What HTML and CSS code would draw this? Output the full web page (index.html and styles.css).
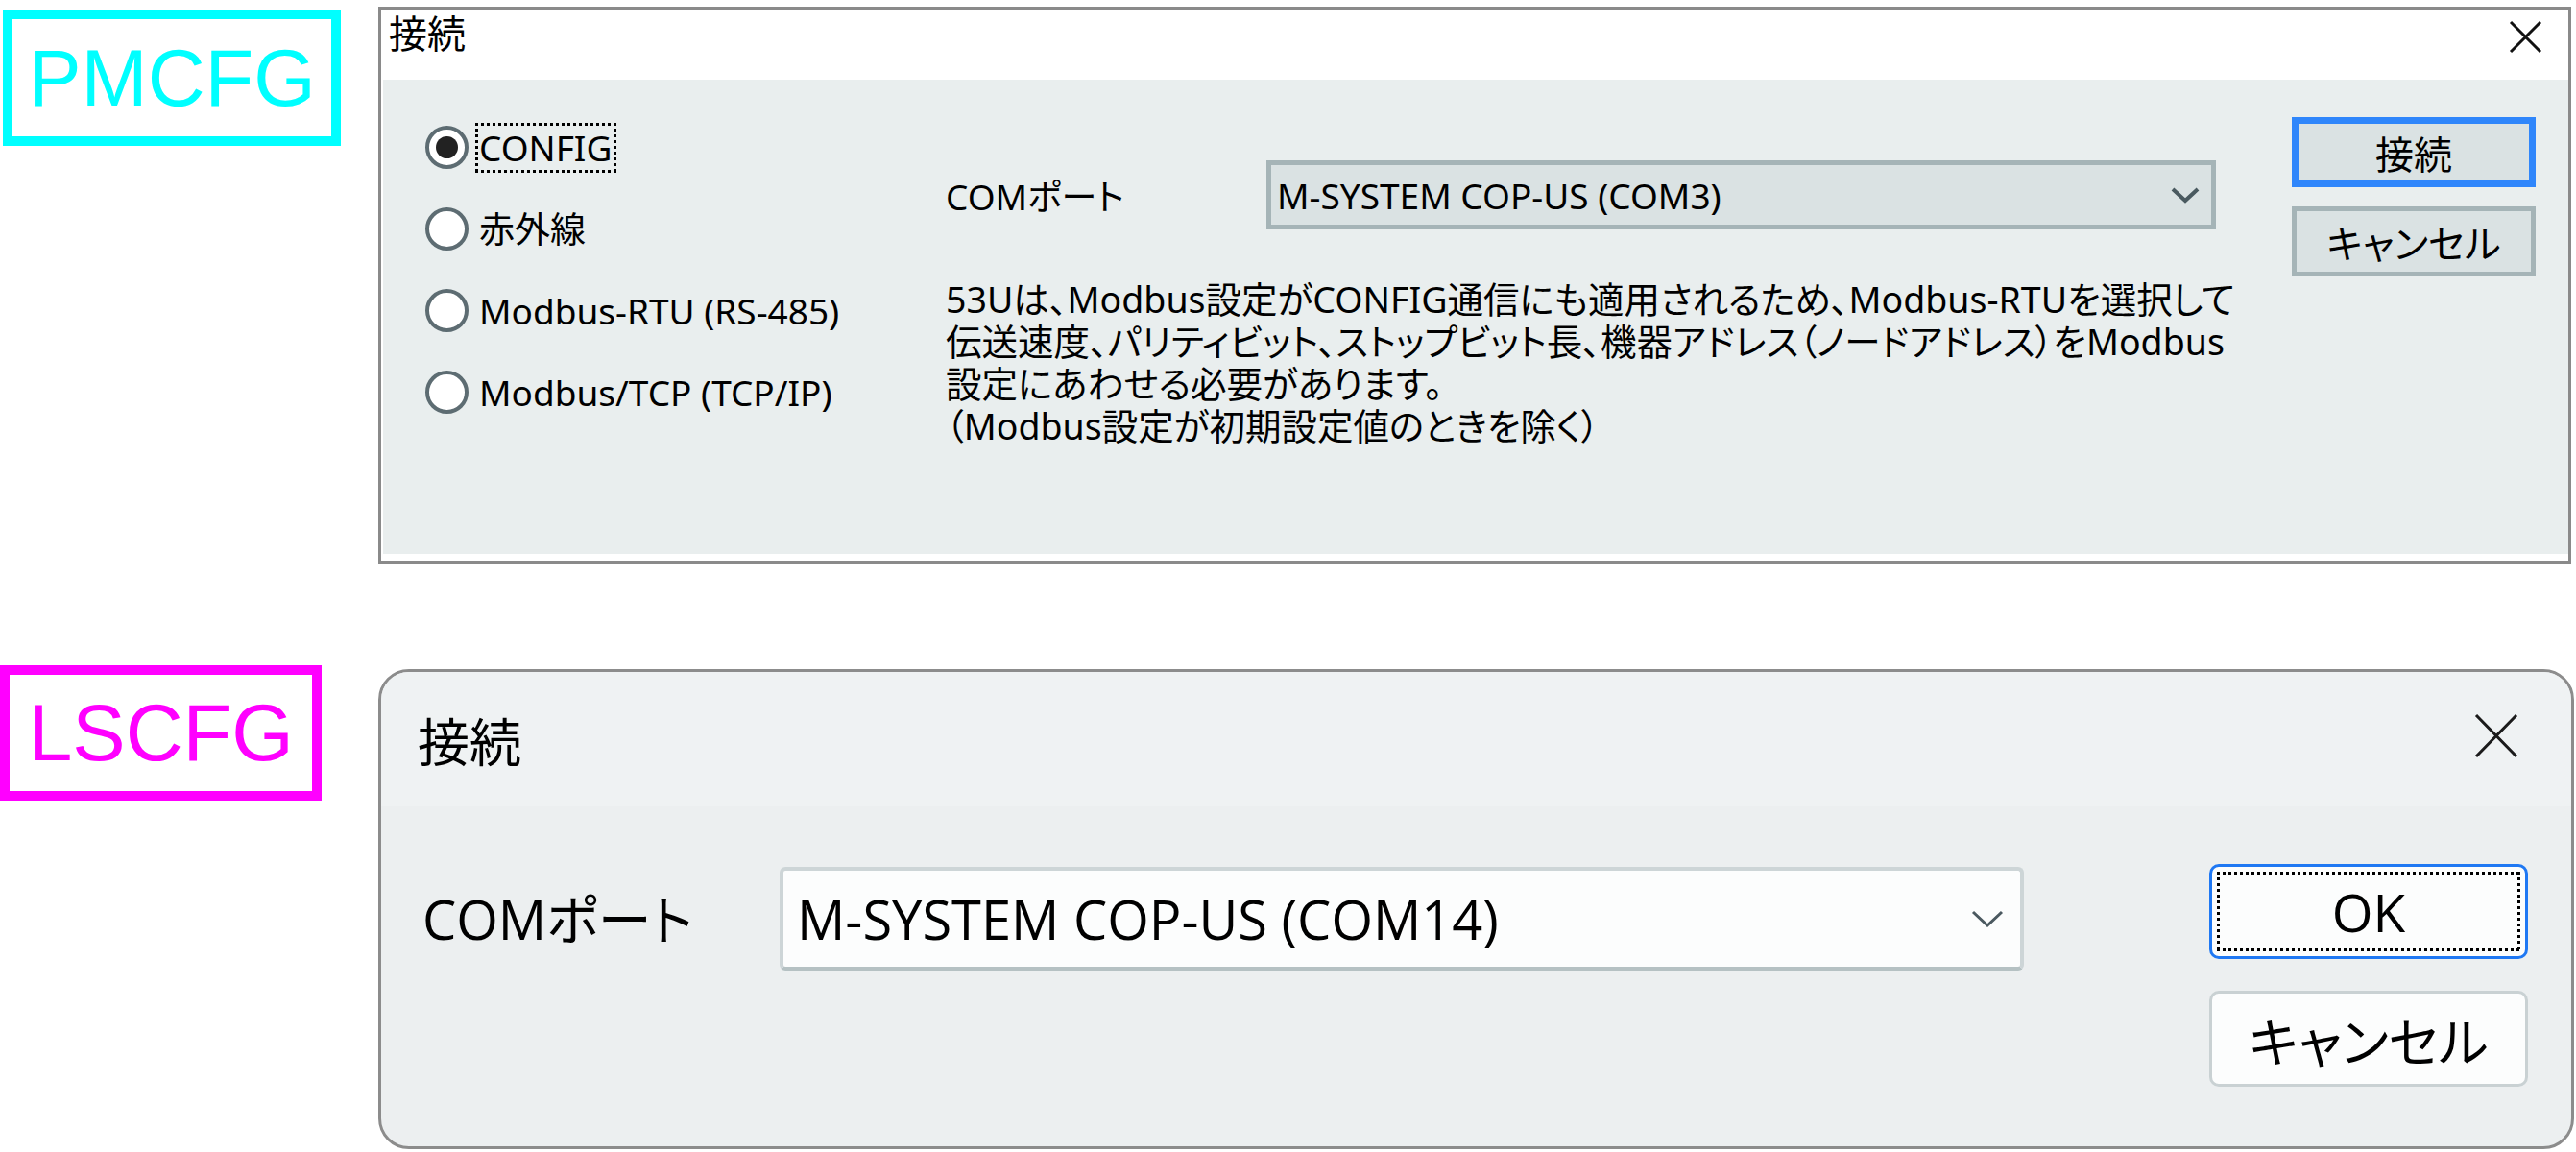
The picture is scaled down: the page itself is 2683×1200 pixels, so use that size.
FILE: index.html
```html
<!DOCTYPE html>
<html lang="ja">
<head>
    <meta charset="utf-8">
    <title>接続</title>
    <link rel="stylesheet" href="styles.css">
</head>
<body>

    <div class="sheet">

        <!-- PMCFG: classic dialog -->
        <section class="row row-pm">
            <div class="tag tag-pm">PMCFG</div>

            <div class="dlg-classic">
                <div class="classic-title">
                    <span class="classic-caption">接続</span>
                    <svg class="classic-close" viewBox="0 0 35 35">
                        <path d="M2 2 L33 33 M33 2 L2 33" stroke="#111" stroke-width="3" fill="none" />
                    </svg>
                </div>

                <div class="classic-body">
                    <div class="radio-list">
                        <div class="radio-item">
                            <span class="radio-mark"><span class="radio-dot"></span></span>
                            <span class="radio-text focus-ring">CONFIG</span>
                        </div>
                        <div class="radio-item">
                            <span class="radio-mark"></span>
                            <span class="radio-text">赤外線</span>
                        </div>
                        <div class="radio-item">
                            <span class="radio-mark"></span>
                            <span class="radio-text">Modbus-RTU (RS-485)</span>
                        </div>
                        <div class="radio-item">
                            <span class="radio-mark"></span>
                            <span class="radio-text">Modbus/TCP (TCP/IP)</span>
                        </div>
                    </div>

                    <div class="port-area">
                        <div class="port-row">
                            <span class="port-label">COMポート</span>
                            <div class="combo-classic">
                                <span>M-SYSTEM COP-US (COM3)</span>
                                <svg class="chevron-classic" viewBox="0 0 30 18">
                                    <path d="M2 3 L15 15 L28 3" stroke="#4a5a60" stroke-width="4" fill="none" />
                                </svg>
                            </div>
                        </div>
                        <div class="note">
                            <div class="note-line">53Uは、Modbus設定がCONFIG通信にも適用されるため、Modbus-RTUを選択して</div>
                            <div class="note-line">伝送速度、パリティビット、ストップビット長、機器アドレス（ノードアドレス）をModbus</div>
                            <div class="note-line">設定にあわせる必要があります。</div>
                            <div class="note-line">（Modbus設定が初期設定値のときを除く）</div>
                        </div>
                    </div>

                    <div class="btn-col">
                        <button class="btn-classic btn-default">接続</button>
                        <button class="btn-classic">キャンセル</button>
                    </div>
                </div>
            </div>
        </section>

        <!-- LSCFG: rounded dialog -->
        <section class="row row-ls">
            <div class="tag tag-ls">LSCFG</div>

            <div class="dlg-modern">
                <div class="modern-title">
                    <span class="modern-caption">接続</span>
                    <svg class="modern-close" viewBox="0 0 46 47">
                        <path d="M2 2 L44 45 M44 2 L2 45" stroke="#1b1b1b" stroke-width="3" fill="none" />
                    </svg>
                </div>

                <div class="modern-body">
                    <span class="modern-label">COMポート</span>
                    <div class="combo-modern">
                        <span>M-SYSTEM COP-US (COM14)</span>
                        <svg class="chevron-modern" viewBox="0 0 34 18">
                            <path d="M2 2 L17 16 L32 2" stroke="#4b5960" stroke-width="3" fill="none" />
                        </svg>
                    </div>
                    <div class="modern-btns">
                        <button class="btn-modern btn-ok"><span class="focus-ring">OK</span></button>
                        <button class="btn-modern">キャンセル</button>
                    </div>
                </div>
            </div>
        </section>

    </div>

</body>
</html>
```

FILE: styles.css
```css
body {
    margin: 0;
    background: #fff;
    color: #000;
    font-family: "Noto Sans", "Noto Sans CJK JP", sans-serif;
}

.sheet {
    width: 2683px;
    padding-top: 7px;
}

.row {
    display: grid;
    grid-template-columns: 394px 1fr;
    align-items: start;
}

.row-ls {
    margin-top: 106px;
}

/* coloured name tags */
.tag {
    box-sizing: border-box;
    border: 10px solid;
    display: flex;
    align-items: center;
    justify-content: center;
    font-family: "Liberation Sans", Arial, sans-serif;
    font-size: 83px;
    line-height: 1;
}

.tag-pm {
    width: 352px;
    height: 142px;
    margin: 3px 0 0 3px;
    color: #00ffff;
    border-color: #00ffff;
}

.tag-ls {
    width: 335px;
    height: 141px;
    color: #ff00ff;
    border-color: #ff00ff;
}

/* dotted keyboard focus rectangle */
.focus-ring {
    background:
        repeating-linear-gradient(90deg, #000 0 3px, transparent 3px 6px) left top / 100% 3px no-repeat,
        repeating-linear-gradient(90deg, #000 0 3px, transparent 3px 6px) left bottom / 100% 3px no-repeat,
        repeating-linear-gradient(180deg, #000 0 3px, transparent 3px 6px) left top / 3px 100% no-repeat,
        repeating-linear-gradient(180deg, #000 0 3px, transparent 3px 6px) right top / 3px 100% no-repeat;
}

/* ---------- classic dialog ---------- */
.dlg-classic {
    box-sizing: border-box;
    height: 580px;
    margin-right: 5px;
    border: 3px solid #8a8a8a;
    background: #fff;
    padding: 0 0 7px 2px;
    display: flex;
    flex-direction: column;
    font-size: 37px;
    font-feature-settings: "palt";
}

.classic-title {
    height: 73px;
    flex: none;
    display: flex;
    justify-content: space-between;
    align-items: flex-start;
    padding: 0 27px 0 6px;
}

    .classic-caption {
        font-size: 40px;
        line-height: 50px;
    }

    .classic-close {
        width: 35px;
        height: 35px;
        margin-top: 11px;
    }

.classic-body {
    flex: 1;
    display: flex;
    align-items: flex-start;
    background: #e9eeee;
    padding: 28px 0 0 44px;
}

.radio-list {
    width: 542px;
    flex: none;
}

.radio-item {
    height: 85px;
    display: flex;
    align-items: center;
    gap: 7px;
}

.radio-mark {
    box-sizing: border-box;
    width: 45px;
    height: 45px;
    flex: none;
    border: 4px solid #5d6c72;
    border-radius: 50%;
    background: #fff;
    display: flex;
    align-items: center;
    justify-content: center;
}

.radio-dot {
    width: 23px;
    height: 23px;
    border-radius: 50%;
    background: #222;
}

.radio-text {
    line-height: 40px;
    padding: 6px 5px 6px 4px;
    white-space: nowrap;
}

.port-area {
    width: 1323px;
    flex: none;
    padding-top: 56px;
}

.port-row {
    display: flex;
    align-items: center;
}

.port-label {
    width: 334px;
}

.combo-classic {
    box-sizing: border-box;
    width: 989px;
    height: 72px;
    border: 5px solid #a5b4b7;
    background: #dae2e3;
    display: flex;
    align-items: center;
    justify-content: space-between;
    padding: 0 12px 0 6px;
}

.chevron-classic {
    width: 30px;
    height: 18px;
}

.note {
    margin-top: 51px;
    font-size: 37.5px;
}

.note-line {
    height: 44px;
    line-height: 44px;
    white-space: nowrap;
}

.btn-col {
    width: 254px;
    flex: none;
    margin-left: 79px;
    padding-top: 11px;
    display: flex;
    flex-direction: column;
    gap: 20px;
}

.btn-classic {
    box-sizing: border-box;
    width: 254px;
    height: 73px;
    padding: 0;
    border: 5px solid #a5b4b7;
    background: #dae2e3;
    color: #000;
    font-family: inherit;
    font-size: 40px;
    font-feature-settings: "palt";
}

.btn-default {
    border: 7px solid #2f86fb;
}

/* ---------- rounded dialog ---------- */
.dlg-modern {
    box-sizing: border-box;
    height: 500px;
    margin: 4px 2px 0 0;
    border: 3px solid #8c8c8c;
    border-radius: 32px;
    overflow: hidden;
    background: #eceff0;
    font-family: "Open Sans", "Noto Sans CJK JP", sans-serif;
    font-size: 56px;
    font-feature-settings: "palt";
}

.modern-title {
    height: 140px;
    background: #eff2f3;
    display: flex;
    align-items: center;
    justify-content: space-between;
    padding: 0 55px 0 38px;
}

    .modern-caption {
        font-size: 54px;
    }

    .modern-close {
        width: 46px;
        height: 47px;
        margin-bottom: 7px;
    }

.modern-body {
    display: flex;
    align-items: flex-start;
    padding: 60px 45px 0 43px;
}

.modern-label {
    width: 372px;
    flex: none;
    margin-top: 3px;
    line-height: 108px;
    white-space: nowrap;
}

.combo-modern {
    box-sizing: border-box;
    width: 1296px;
    height: 108px;
    flex: none;
    margin-top: 3px;
    border: 4px solid #cdd5d7;
    border-bottom-color: #b5c1c3;
    border-radius: 6px;
    background: #fcfdfd;
    display: flex;
    align-items: center;
    justify-content: space-between;
    padding: 0 17px 0 14px;
    white-space: nowrap;
}

.chevron-modern {
    width: 34px;
    height: 18px;
}

.modern-btns {
    width: 332px;
    flex: none;
    margin-left: 193px;
    display: flex;
    flex-direction: column;
    gap: 33px;
}

.btn-modern {
    box-sizing: border-box;
    width: 332px;
    height: 100px;
    padding: 0;
    border: 3px solid #c9d1d3;
    border-radius: 10px;
    background: #fcfdfd;
    color: #000;
    font-family: inherit;
    font-size: 55px;
    font-feature-settings: "palt";
}

.btn-ok {
    height: 99px;
    padding: 5px;
    border-color: #1f78f3;
}

    .btn-ok .focus-ring {
        height: 100%;
        display: flex;
        align-items: center;
        justify-content: center;
    }
```
